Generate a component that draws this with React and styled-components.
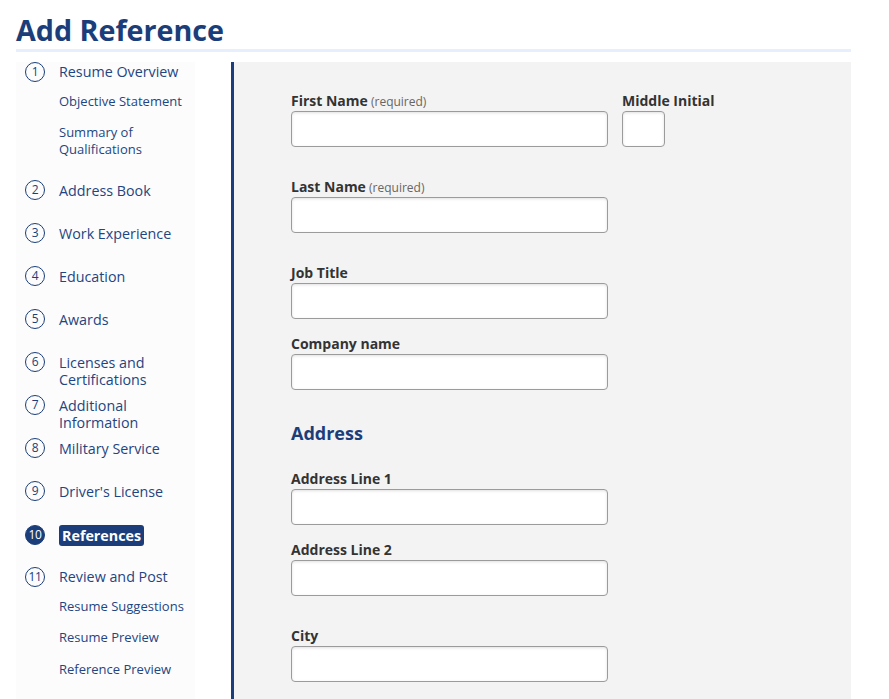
import React from "react";
import styled, { createGlobalStyle } from "styled-components";

const NAVY = "#1b3e7a";
const NAV_TEXT = "#1f4582";

const Global = createGlobalStyle`
  html, body { margin: 0; padding: 0; background: #ffffff; overflow: hidden; }
  body { font-family: "Open Sans", "Noto Sans", Arial, sans-serif; }
  * { box-sizing: border-box; }
`;

const Page = styled.div`
  width: 835px;
  height: 699px;
  margin-left: 16px;
  padding-top: 11px;
  display: flex;
  flex-direction: column;
`;

const Title = styled.h1`
  margin: 0;
  font-size: 28.7px;
  font-weight: 700;
  color: ${NAVY};
  line-height: 38px;
  border-bottom: 3px solid #e6effb;
`;

const Body = styled.div`
  flex: 1;
  display: flex;
  margin-top: 10px;
  gap: 36px;
  min-height: 0;
`;

const Sidebar = styled.nav`
  width: 179px;
  flex: none;
  background: #fcfcfc;
  padding: 0 0 0 9px;
`;

const Group = styled.div`
  margin-bottom: ${(p) => (p.$hasSubs ? 14.5 : 23)}px;
`;

const StepRow = styled.div`
  display: flex;
  align-items: center;
  gap: 14px;
  height: ${(p) => (p.$active ? 22 : 20)}px;
  margin-top: ${(p) => (p.$first ? -0.5 : p.$active ? 3.5 : 0)}px;
  margin-bottom: ${(p) => (p.$active ? -2.5 : 0)}px;
`;

const Circle = styled.span`
  flex: none;
  align-self: flex-start;
  margin-top: ${(p) => (p.$active ? 1 : 0)}px;
  width: 20px;
  height: 20px;
  border-radius: 50%;
  border: 1.3px solid ${NAVY};
  background: ${(p) => (p.$active ? NAVY : "transparent")};
  color: ${(p) => (p.$active ? "#ffffff" : NAVY)};
  font-size: 12px;
  line-height: 1;
  display: flex;
  align-items: center;
  justify-content: center;
  letter-spacing: -0.3px;
`;

const StepLabel = styled.a`
  align-self: flex-start;
  display: inline-block;
  width: 136px;
  padding-top: 1.5px;
  font-size: 14.3px;
  line-height: 17px;
  color: ${NAV_TEXT};
  text-decoration: none;
`;

const ActiveLabel = styled.a`
  display: inline-block;
  background: ${NAVY};
  color: #ffffff;
  font-weight: 700;
  font-size: 14.3px;
  line-height: 17px;
  padding: 2px 3px;
  border-radius: 3px;
  text-decoration: none;
`;

const SubList = styled.div`
  padding: 4.5px 0 0 34px;
`;

const SubItem = styled.a`
  display: block;
  padding: 7px 0 7.3px;
  width: 136px;
  font-size: 13px;
  line-height: 17px;
  color: ${NAV_TEXT};
  text-decoration: none;
`;

const Panel = styled.main`
  flex: 1;
  background: #f3f3f3;
  border-left: 3px solid ${NAVY};
  padding: 29px 0 0 57px;
`;

const FieldRow = styled.div`
  display: flex;
  gap: 14px;
  margin-bottom: ${(p) => p.$gap}px;
`;

const Field = styled.div`
  display: flex;
  flex-direction: column;
`;

const Label = styled.label`
  display: block;
  height: 20px;
  font-size: 14px;
  font-weight: 700;
  color: #333333;
  line-height: 20px;
  white-space: nowrap;
`;

const Hint = styled.span`
  font-size: 12px;
  font-weight: 400;
  line-height: 1;
  color: #666666;
`;

const Input = styled.input`
  display: block;
  width: ${(p) => p.$w || 317}px;
  height: 36px;
  margin: 0;
  border: 1px solid #9b9b9b;
  border-radius: 4px;
  background: #ffffff;
  box-shadow: inset 0 1px 3px rgba(0, 0, 0, 0.12);
  font-family: inherit;
  font-size: 14px;
  padding: 0 8px;
  outline: none;
`;

const SectionHeading = styled.h2`
  margin: 0 0 24px;
  font-size: 18px;
  font-weight: 700;
  line-height: 24px;
  color: ${NAVY};
`;

const steps = [
  { n: 1, label: "Resume Overview", subs: ["Objective Statement", "Summary of Qualifications"] },
  { n: 2, label: "Address Book" },
  { n: 3, label: "Work Experience" },
  { n: 4, label: "Education" },
  { n: 5, label: "Awards" },
  { n: 6, label: "Licenses and Certifications" },
  { n: 7, label: "Additional Information" },
  { n: 8, label: "Military Service" },
  { n: 9, label: "Driver's License" },
  { n: 10, label: "References", active: true },
  { n: 11, label: "Review and Post", subs: ["Resume Suggestions", "Resume Preview", "Reference Preview"] },
];

function TextField({ label, hint, w, gap }) {
  return (
    <FieldRow $gap={gap}>
      <Field>
        <Label>
          {label}
          {hint && <Hint> {hint}</Hint>}
        </Label>
        <Input type="text" $w={w} />
      </Field>
    </FieldRow>
  );
}

export default function App() {
  return (
    <>
      <Global />
      <Page>
        <Title>Add Reference</Title>
        <Body>
          <Sidebar>
            {steps.map((s, i) => (
              <Group key={s.n} $hasSubs={!!s.subs}>
                <StepRow $active={s.active} $first={i === 0}>
                  <Circle $active={s.active}>{s.n}</Circle>
                  {s.active ? (
                    <ActiveLabel href="#">{s.label}</ActiveLabel>
                  ) : (
                    <StepLabel href="#">{s.label}</StepLabel>
                  )}
                </StepRow>
                {s.subs && (
                  <SubList>
                    {s.subs.map((t) => (
                      <SubItem key={t} href="#">
                        {t}
                      </SubItem>
                    ))}
                  </SubList>
                )}
              </Group>
            ))}
          </Sidebar>
          <Panel>
            <FieldRow $gap={30}>
              <Field>
                <Label>
                  First Name<Hint> (required)</Hint>
                </Label>
                <Input type="text" />
              </Field>
              <Field>
                <Label>Middle Initial</Label>
                <Input type="text" $w={43} />
              </Field>
            </FieldRow>
            <TextField label="Last Name" hint="(required)" gap={30} />
            <TextField label="Job Title" gap={15} />
            <TextField label="Company name" gap={31} />
            <SectionHeading>Address</SectionHeading>
            <TextField label="Address Line 1" gap={15} />
            <TextField label="Address Line 2" gap={30} />
            <TextField label="City" gap={15} />
          </Panel>
        </Body>
      </Page>
    </>
  );
}
